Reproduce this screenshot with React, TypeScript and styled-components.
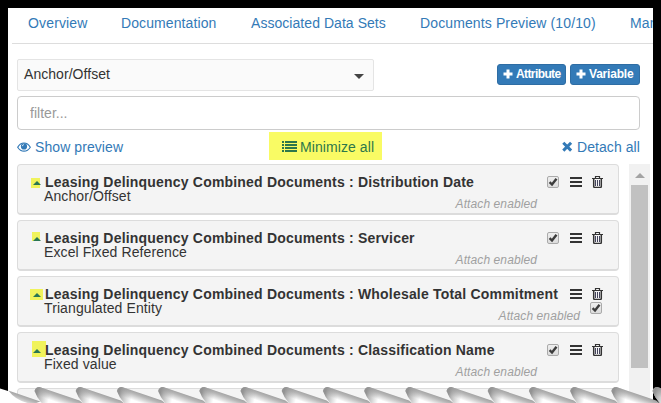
import React from "react";
import styled, { createGlobalStyle } from "styled-components";

const GlobalStyle = createGlobalStyle`
  * { box-sizing: border-box; }
  body { margin: 0; overflow: hidden; background: #000; }
`;

const Frame = styled.div`
  position: relative;
  width: 661px;
  height: 403px;
  padding: 8px 8px 0;
  overflow: hidden;
  background: #000;
  color: #333;
  font: 14px/20px "Liberation Sans", Arial, sans-serif;
  white-space: nowrap;
`;

const Page = styled.main`
  height: 395px;
  overflow: hidden;
  background: #fff;
`;

const Tabs = styled.nav`
  display: flex;
  height: 36px;
  margin-left: 4px;
  padding: 5px 0 0 16px;
  border-bottom: 1px solid #ddd;
  overflow: hidden;
`;

const Tab = styled.a<{ $width: number; $spacing: number }>`
  flex: 0 0 ${(p) => p.$width}px;
  color: #337ab7;
  letter-spacing: ${(p) => p.$spacing}px;
`;

const Content = styled.section`
  width: 633px;
  margin-left: 9px;
  padding-top: 15px;
`;

const Toolbar = styled.div`
  display: flex;
  align-items: center;
  justify-content: space-between;
  width: 623px;
  height: 32px;
`;

const Select = styled.div`
  display: flex;
  align-items: center;
  justify-content: space-between;
  width: 357px;
  height: 32px;
  padding: 0 9px 2px 6px;
  border: 1px solid #e4e4e4;
  border-radius: 2px;
  background: #fafafa;
  letter-spacing: 0.05px;
`;

const Caret = styled.span`
  margin-top: 5px;
  border: 5px solid transparent;
  border-top-color: #444;
  border-bottom: 0;
`;

const Buttons = styled.div`
  display: flex;
  gap: 4px;
  padding-bottom: 1px;
`;

const Button = styled.button<{ $width: number; $spacing: number }>`
  display: flex;
  align-items: center;
  gap: 3px;
  width: ${(p) => p.$width}px;
  height: 21px;
  padding: 0 0 1px 5px;
  border: 1px solid #2e6da4;
  border-radius: 3px;
  background: #337ab7;
  color: #fff;
  font: bold 12px/18px "Liberation Sans", Arial, sans-serif;
  letter-spacing: ${(p) => p.$spacing}px;
`;

const Filter = styled.input`
  display: block;
  width: 623px;
  height: 34px;
  margin-top: 5px;
  padding: 0 12px 1px;
  border: 1px solid #ccc;
  border-radius: 4px;
  outline: 0;
  font: 14px "Liberation Sans", Arial, sans-serif;
  letter-spacing: 0.02px;
  &::placeholder { color: #999; opacity: 1; }
`;

const Actions = styled.div`
  display: grid;
  grid-template-columns: 252px 113px 258px;
  height: 28px;
  margin: 2px 0 4px;
`;

const Action = styled.a<{ $end?: boolean }>`
  display: flex;
  align-items: center;
  justify-content: ${(p) => (p.$end ? "flex-end" : "flex-start")};
  gap: 4px;
  padding-top: 1px;
  color: #337ab7;
  letter-spacing: 0.08px;
`;

const Highlighted = styled(Action)`
  gap: 3px;
  padding-left: 13px;
  background: #f9fb64;
  color: #2d774b;
`;

const ListArea = styled.div`
  display: flex;
  justify-content: space-between;
  height: 239px;
`;

const List = styled.div`
  display: flex;
  flex-direction: column;
  gap: 5px;
  width: 602px;
`;

const Card = styled.article`
  flex: none;
  height: 51px;
  padding: 7px 15px 0 13px;
  border: 1px solid #dcdcdc;
  border-bottom-width: 2px;
  border-radius: 4px;
  background: #f4f4f4;
`;

const CardRow = styled.div`
  display: flex;
  justify-content: space-between;
  height: 17px;
`;

const Heading = styled.div`
  display: flex;
  height: 20px;
`;

const Mark = styled.span<{ $left: number; $top: number; $w: number; $h: number }>`
  flex: none;
  width: ${(p) => p.$w}px;
  height: ${(p) => p.$h}px;
  margin: ${(p) => p.$top}px ${(p) => 14 - p.$left - p.$w}px 0 ${(p) => p.$left}px;
  background: #f0f35c;
`;

const Collapse = styled.span`
  z-index: 1;
  flex: none;
  align-self: flex-start;
  margin: 9px 4px 0 -12px;
  border: 4px solid transparent;
  border-top: 0;
  border-bottom-color: #287653;
`;

const Title = styled.b`
  letter-spacing: 0.195px;
`;

const Kind = styled.div`
  margin: -1px 0 0 13px;
  line-height: 16px;
  letter-spacing: 0.1px;
`;

const Tools = styled.div`
  display: flex;
  gap: 10px;
  padding-top: 4px;
`;

const Check = styled.span`
  display: flex;
  width: 12px;
  height: 12px;
  margin-right: 1px;
  border: 1px solid #aaa;
  border-radius: 2px;
  background: linear-gradient(#eee, #dcdcdc);
`;

const Attachment = styled.div<{ $below: boolean }>`
  display: flex;
  gap: 10px;
  padding-top: 1px;
  padding-right: ${(p) => (p.$below ? 0 : 66)}px;
`;

const Status = styled.i`
  margin-top: 5px;
  color: #a0a0a0;
  font-size: 12px;
  line-height: 18px;
  letter-spacing: 0.1px;
`;

const Scrollbar = styled.div`
  display: flex;
  flex-direction: column;
  align-items: center;
  width: 21px;
  background: #f1f1f1;
`;

const Arrow = styled.span`
  margin: 9px 0 7px;
  border: 5px solid transparent;
  border-top: 0;
  border-bottom-color: #a3a3a3;
`;

const Thumb = styled.span`
  width: 17px;
  height: 183px;
  background: #c1c1c1;
`;

const TornEdge = styled.svg`
  position: absolute;
  left: 0;
  bottom: 0;
`;

function EyeIcon() {
  return (
    <svg width="14" height="12" viewBox="0 0 14 12" fill="none" stroke="#337ab7">
      <path d="M.7 6.2Q3.2 2 7 2t6.3 4.2Q10.8 10.2 7 10.2T.7 6.2Z" strokeWidth="1.2" />
      <circle cx="7" cy="5.4" r="3.1" fill="#337ab7" stroke="none" />
      <path d="M5.3 5.2Q5.4 3.7 6.9 3.6" stroke="#fff" strokeWidth=".8" />
    </svg>
  );
}

function ListIcon() {
  return (
    <svg width="15" height="12" viewBox="0 0 15 12" fill="#2d774b" shapeRendering="crispEdges">
      <path d="M0 0h2v2H0zM3 0h12v2H3zM0 3h2v2H0zM3 3h12v2H3zM0 6h2v2H0zM3 6h12v2H3zM0 9h2v2H0zM3 9h12v2H3z" />
    </svg>
  );
}

function CrossIcon() {
  return (
    <svg width="11" height="11" viewBox="0 0 11 11">
      <path d="m1.3 1.8 7.8 7.8m0-7.8L1.3 9.6" stroke="#337ab7" strokeWidth="3" />
    </svg>
  );
}

function PlusIcon() {
  return (
    <svg width="10" height="10" viewBox="0 0 10 10">
      <path d="M5 .5v9M.5 5h9" stroke="#fff" strokeWidth="3" />
    </svg>
  );
}

function BarsIcon() {
  return (
    <svg width="12" height="12" viewBox="0 0 12 12" shapeRendering="crispEdges">
      <path d="M0 1h12v2H0zM0 5h12v2H0zM0 9h12v2H0z" fill="#333" />
    </svg>
  );
}

function TrashIcon() {
  return (
    <svg width="11" height="12" viewBox="0 0 11 12" fill="none" stroke="#333">
      <path d="M0 2.5h11M3.500 2V.5h4V2" strokeWidth="1.200" />
      <path d="M1.700 3v7.400q0 1 1 1h5.600q1 0 1-1V3" strokeWidth="1.500" />
      <path d="M3.500 4v6M5.500 4v6M7.500 4v6" stroke="#44445c" />
    </svg>
  );
}

function CheckBox() {
  return (
    <Check>
      <svg width="10" height="10" viewBox="0 0 10 10" fill="none">
        <path d="M1.6 5.2 4 7.5 8.5 1.7" stroke="#3c3c3c" strokeWidth="2.4" />
      </svg>
    </Check>
  );
}

const tears = Array.from({ length: 16 }, (_, i) => 34.5 + i * 41.2);

function Tear() {
  return (
    <TornEdge width="661" height="17" viewBox="0 386 661 17">
      <defs>
        <linearGradient id="curl" gradientUnits="userSpaceOnUse" x1="20" y1="6" x2="17" y2="14.5">
          <stop offset="0" stopColor="#a4a4a4" />
          <stop offset=".3" stopColor="#b8b8b8" />
          <stop offset="1" stopColor="#fff" />
        </linearGradient>
        <linearGradient id="lip" gradientUnits="userSpaceOnUse" x1="2" y1="8" x2="15" y2="11">
          <stop offset="0" stopColor="#939393" />
          <stop offset=".25" stopColor="#999" stopOpacity=".7" />
          <stop offset="1" stopColor="#aaa" stopOpacity="0" />
        </linearGradient>
      </defs>
      {tears.map((x) => (
        <g key={x} transform={`translate(${x} 386)`}>
          <path d="M7 17Q2 11 0 5Q1 1 5 1L45 14.5 48 17Z" fill="url(#curl)" />
          <path d="M7 17Q2 11 0 5Q1 1 5 1L45 14.5 48 17Z" fill="url(#lip)" />
        </g>
      ))}
      <path d="M0 388.5 8 391 42 403H0Z" fill="#fff" />
      <g transform="translate(-6.7 386)">
        <path d="M15 4.500 47 15.500 43 17H34Q22 14 15 4.500Z" fill="url(#curl)" />
      </g>
    </TornEdge>
  );
}

const tabs = [
  { label: "Overview", width: 93, spacing: 0.15 },
  { label: "Documentation", width: 130, spacing: 0.1 },
  { label: "Associated Data Sets", width: 169, spacing: 0.05 },
  { label: "Documents Preview (10/10)", width: 210, spacing: 0.12 },
  { label: "Manage", width: 60, spacing: 0.15 },
];

const cards = [
  { name: "Distribution Date", kind: "Anchor/Offset", below: false, mark: [0, 6, 9, 10] },
  { name: "Servicer", kind: "Excel Fixed Reference", below: false, mark: [1, 4, 8, 9] },
  { name: "Wholesale Total Commitment", kind: "Triangulated Entity", below: true, mark: [-1, 5, 13, 11] },
  { name: "Classification Name", kind: "Fixed value", below: false, mark: [1, 1, 14, 16] },
];

export default function App() {
  return (
    <Frame>
      <GlobalStyle />
      <Page>
        <Tabs>
          {tabs.map((t) => (
            <Tab key={t.label} $width={t.width} $spacing={t.spacing}>{t.label}</Tab>
          ))}
        </Tabs>
        <Content>
          <Toolbar>
            <Select>Anchor/Offset<Caret /></Select>
            <Buttons>
              <Button $width={69} $spacing={-0.6}><PlusIcon />Attribute</Button>
              <Button $width={70} $spacing={-0.2}><PlusIcon />Variable</Button>
            </Buttons>
          </Toolbar>
          <Filter placeholder="filter..." />
          <Actions>
            <Action><EyeIcon />Show preview</Action>
            <Highlighted><ListIcon />Minimize all</Highlighted>
            <Action $end><CrossIcon />Detach all</Action>
          </Actions>
          <ListArea>
            <List>
              {cards.map((c) => (
                <Card key={c.name}>
                  <CardRow>
                    <Heading>
                      <Mark $left={c.mark[0]} $top={c.mark[1]} $w={c.mark[2]} $h={c.mark[3]} />
                      <Collapse />
                      <Title>Leasing Delinquency Combined Documents : {c.name}</Title>
                    </Heading>
                    <Tools>
                      {!c.below && <CheckBox />}
                      <BarsIcon />
                      <TrashIcon />
                    </Tools>
                  </CardRow>
                  <CardRow>
                    <Kind>{c.kind}</Kind>
                    <Attachment $below={c.below}>
                      <Status>Attach enabled</Status>
                      {c.below && <CheckBox />}
                    </Attachment>
                  </CardRow>
                </Card>
              ))}
              <Card />
            </List>
            <Scrollbar><Arrow /><Thumb /></Scrollbar>
          </ListArea>
        </Content>
      </Page>
      <Tear />
    </Frame>
  );
}
